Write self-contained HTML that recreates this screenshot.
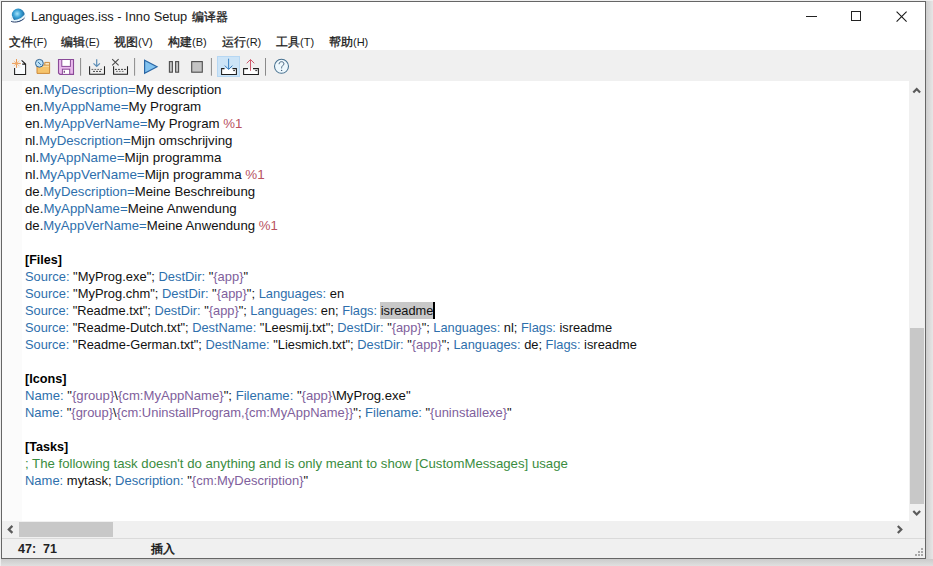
<!DOCTYPE html>
<html><head><meta charset="utf-8">
<style>
html,body{margin:0;padding:0;}
body{width:933px;height:566px;overflow:hidden;position:relative;background:#e6e6e6;font-family:"Liberation Sans",sans-serif;color:#1a1a1a;}
.a{position:absolute;}
#shadow-r{left:926px;top:0;width:7px;height:566px;background:linear-gradient(to right,#cecece,#e6e6e6);}
#shadow-b{left:0;top:559px;width:933px;height:7px;background:linear-gradient(to bottom,#cbcbcb,#e0e0e0);}
#shadow-t{left:0;top:0;width:933px;height:1px;background:#efefef;}
#shadow-l{left:0;top:0;width:1px;height:566px;background:#efefef;}
#win{left:1px;top:1px;width:923px;height:556px;border:1px solid #666;background:#fff;}
.t{font-size:13px;white-space:pre;line-height:17px;}
.code{position:absolute;left:25px;white-space:pre;font-size:13px;line-height:17px;height:17px;transform-origin:0 0;color:#111;}
.k{color:#2e6fac;}
.p{color:#80609c;}
.r{color:#b8525f;}
.c{color:#3a8c40;}
.b{font-weight:bold;color:#000;}
.cj{-webkit-text-stroke:0.3px currentColor;}
.s{}
.m{position:absolute;top:34.5px;font-size:12px;line-height:14px;white-space:pre;transform-origin:0 0;}
.ml{font-size:11px;}
</style></head><body>
<div class="a" id="shadow-r"></div>
<div class="a" id="shadow-b"></div>
<div class="a" id="shadow-t"></div>
<div class="a" id="shadow-l"></div>
<div class="a" id="win"></div>
<!-- title -->
<svg class="a" style="left:6px;top:4px" width="24" height="24" viewBox="6 4 24 24">
  <defs><radialGradient id="g1" cx="0.42" cy="0.4" r="0.65"><stop offset="0" stop-color="#a8e4fa"/><stop offset="0.45" stop-color="#3aa2d6"/><stop offset="1" stop-color="#135c94"/></radialGradient></defs>
  <circle cx="18.2" cy="15" r="6.4" fill="url(#g1)"/>
  <path d="M11 20.2C13.5 21.8 21 21 25.6 15.2" stroke="#e8f6fc" stroke-width="2.2" fill="none"/>
  <path d="M11.2 21.4C15 23 21.5 21.6 24.6 18" stroke="#243a66" stroke-width="1.0" fill="none"/>
  <path d="M11.4 18.8C11.8 17.5 12.5 16.8 13 16.5" stroke="#cfeefa" stroke-width="1" fill="none"/>
</svg>
<div class="a t" id="tt1" style="left:31px;top:9px;font-size:12.5px;transform-origin:0 0;transform:scaleX(1.026)">Languages.iss - Inno Setup</div>
<div class="a t" id="tt2" style="left:192px;top:8.6px;font-size:12px;transform-origin:0 0;"><span class="cj">编译器</span></div>
<div class="a" style="left:806px;top:16px;width:11px;height:1px;background:#222"></div>
<div class="a" style="left:851px;top:11px;width:8px;height:8px;border:1px solid #222"></div>
<svg class="a" style="left:896px;top:10.5px" width="12" height="12" viewBox="0 0 12 12"><path d="M0.6 0.6L10.6 10.6M10.6 0.6L0.6 10.6" stroke="#1a1a1a" stroke-width="1.1"/></svg>
<!-- menu -->
<div class="m" style="left:9px"><span class="cj">文件</span><span class="ml">(F)</span></div>
<div class="m" style="left:61px"><span class="cj">编辑</span><span class="ml">(E)</span></div>
<div class="m" style="left:114px"><span class="cj">视图</span><span class="ml">(V)</span></div>
<div class="m" style="left:168px"><span class="cj">构建</span><span class="ml">(B)</span></div>
<div class="m" style="left:222px"><span class="cj">运行</span><span class="ml">(R)</span></div>
<div class="m" style="left:276px"><span class="cj">工具</span><span class="ml">(T)</span></div>
<div class="m" style="left:329px"><span class="cj">帮助</span><span class="ml">(H)</span></div>
<!-- toolbar -->
<div class="a" style="left:2px;top:50px;width:923px;height:31px;background:#f0f0f0"></div>
<svg class="a" style="left:0;top:50px" width="300" height="30" viewBox="0 50 300 30">
<g fill="none" stroke-linecap="butt">
 <!-- new -->
 <path d="M14.6 68V74.5H25.6V64.1L21.6 60.3H20.5V68Z" fill="#fafcfe" stroke="none"/>
 <path d="M14.6 68V74.5H25.6V64.1L21.6 60.3M22.2 64.1H25.6" stroke="#1e1e1e" stroke-width="1.05"/>
 <g stroke="#eb9a52" stroke-width="1">
  <path d="M12 63.4H20.8M16.5 59V67.8"/>
  <path d="M13.8 60.7L19.2 66.1M19.2 60.7L13.8 66.1" stroke-width="0.9" stroke="#f3bf8c"/>
 </g>
 <circle cx="16.5" cy="63.4" r="1.3" fill="#f0a868"/>
 <!-- open -->
 <path d="M44.8 65.2V62.4H49.6V65.2" fill="#fde9c4" stroke="#c98a3c" stroke-width="1"/>
 <path d="M37 65.2H49.6V73.4H37Z" fill="#f6c46c" stroke="#cd8a3a" stroke-width="1"/>
 <path d="M37.6 66.3H49" stroke="#fbdca0" stroke-width="1.2"/>
 <circle cx="39.4" cy="63.3" r="3.9" fill="#bde2f8" stroke="#2f618f" stroke-width="1"/>
 <path d="M38 61.9L40.9 64.8" stroke="#2d6aa0" stroke-width="1"/>
 <!-- save -->
 <path d="M58.5 59.5H73.5V74.4H60L58.5 72.9Z" fill="#e9b9ec" stroke="#8a4a98" stroke-width="1.1"/>
 <rect x="61.8" y="59.5" width="8.6" height="6.9" fill="#fff" stroke="#8a4a98" stroke-width="1"/>
 <rect x="62.4" y="69.2" width="7.3" height="5.2" fill="#fff" stroke="#8a4a98" stroke-width="1"/>
 <path d="M64.3 70.8V72.8" stroke="#6a3a78" stroke-width="1.2"/>
 <!-- separators -->
 <path d="M80.6 58V75.7M134.6 58V75.7M211.4 58V75.7M265.5 58V75.7" stroke="#8a8a8a" stroke-width="1"/>
 <!-- compile -->
 <path d="M96.7 59.2V66.4M93.5 63.3L96.7 66.5L99.9 63.3" stroke="#5b8db6" stroke-width="1.2"/>
 <path d="M89.6 66.2V74.2H104.5V66.2" stroke="#1e1e1e" stroke-width="1.05"/>
 <path d="M91.5 69.4H103" stroke="#555" stroke-width="0.9" stroke-dasharray="1.8 1.1"/>
 <path d="M93 71.4H101" stroke="#444" stroke-width="1" stroke-dasharray="2 1"/>
 <!-- clean -->
 <path d="M112.2 59.2L118.6 65.4M118.6 59.2L112.2 65.4" stroke="#4a4a4a" stroke-width="1.1"/>
 <path d="M113.6 66.2V74.2H127.5V66.2" stroke="#1e1e1e" stroke-width="1.05"/>
 <path d="M115 69.4H126" stroke="#444" stroke-width="1" stroke-dasharray="2 1"/>
 <path d="M116 71.4H124" stroke="#666" stroke-width="0.9" stroke-dasharray="1.8 1.1"/>
 <!-- run -->
 <path d="M144.6 60.3L157 66.8L144.6 73.2Z" fill="#82c3f0" stroke="#2a66a4" stroke-width="1.2" stroke-linejoin="miter"/>
 <!-- pause -->
 <rect x="169.4" y="61.6" width="3" height="10.6" fill="#c4c4c4" stroke="#4e4e4e" stroke-width="1.1"/>
 <rect x="175.6" y="61.6" width="3" height="10.6" fill="#c4c4c4" stroke="#4e4e4e" stroke-width="1.1"/>
 <!-- stop -->
 <rect x="191.7" y="61.6" width="10.6" height="10.6" fill="#c4c4c4" stroke="#4e4e4e" stroke-width="1.1"/>
 <!-- highlighted -->
 <rect x="217.5" y="56.5" width="22" height="20" fill="#cce4f7" stroke="#b6d7f3" stroke-width="1"/>
 <rect x="221.6" y="68.6" width="14.8" height="5.8" fill="#fff"/>
 <path d="M224.5 68.6H221.6V74.4H236.4V68.6H232.5" stroke="#1e1e1e" stroke-width="1.05"/>
 <path d="M233.2 70.6H235" stroke="#333" stroke-width="1"/>
 <path d="M228.6 58.7V69.4M224.8 65.6L228.6 69.4L232.4 65.6" stroke="#3a80c0" stroke-width="1"/>
 <!-- upload -->
 <rect x="243.6" y="68.6" width="14.8" height="5.8" fill="#fff"/>
 <path d="M248 68.6H243.6V74.4H258.4V68.6H253" stroke="#1e1e1e" stroke-width="1.05"/>
 <path d="M255.3 70.6H257.2" stroke="#333" stroke-width="1"/>
 <path d="M250.5 59.6V70.8M246.7 63.3L250.5 59.5L254.3 63.3" stroke="#cf5a6c" stroke-width="1"/>
 <!-- help -->
 <circle cx="281.5" cy="66.3" r="7" fill="#eef8fd" stroke="#46708f" stroke-width="1.05"/>
 <path d="M279.1 64.2C279.1 62.5 280.2 61.7 281.5 61.7C282.9 61.7 283.9 62.5 283.9 63.8C283.9 65.4 281.6 65.8 281.6 67.7V68.4" stroke="#46637e" stroke-width="1"/>
 <circle cx="281.6" cy="70.4" r="0.7" fill="#46637e"/>
</g>
</svg>
<!-- editor -->
<div class="a" style="left:909px;top:81px;width:16px;height:440px;background:#f0f0f0"></div>
<div class="a" style="left:910px;top:328px;width:14px;height:176px;background:#c8c8c8"></div>
<div class="a" style="left:2px;top:521px;width:923px;height:17px;background:#f0f0f0"></div>
<div class="a" style="left:19px;top:522px;width:94px;height:15px;background:#c8c8c8"></div>
<div class="a" style="left:2px;top:538px;width:923px;height:1px;background:#dadada"></div>
<div class="a" style="left:2px;top:539px;width:923px;height:19px;background:#f0f0f0"></div>
<div class="a" style="left:2px;top:81px;width:20px;height:440px;background:#fbfbfb"></div>
<!-- selection + caret -->
<div class="a" style="left:380px;top:302px;width:53px;height:17px;background:#c8c8c8"></div>
<div class="code" style="top:81px;transform:scaleX(1.0241)"><span class="n">en.</span><span class="k">MyDescription=</span><span class="n">My description</span></div>
<div class="code" style="top:98px;transform:scaleX(1.0269)"><span class="n">en.</span><span class="k">MyAppName=</span><span class="n">My Program</span></div>
<div class="code" style="top:115px;transform:scaleX(1.0178)"><span class="n">en.</span><span class="k">MyAppVerName=</span><span class="n">My Program </span><span class="r">%1</span></div>
<div class="code" style="top:132px;transform:scaleX(1.0197)"><span class="n">nl.</span><span class="k">MyDescription=</span><span class="n">Mijn omschrijving</span></div>
<div class="code" style="top:149px;transform:scaleX(1.0314)"><span class="n">nl.</span><span class="k">MyAppName=</span><span class="n">Mijn programma</span></div>
<div class="code" style="top:166px;transform:scaleX(1.0319)"><span class="n">nl.</span><span class="k">MyAppVerName=</span><span class="n">Mijn programma </span><span class="r">%1</span></div>
<div class="code" style="top:183px;transform:scaleX(1.0159)"><span class="n">de.</span><span class="k">MyDescription=</span><span class="n">Meine Beschreibung</span></div>
<div class="code" style="top:200px;transform:scaleX(1.0184)"><span class="n">de.</span><span class="k">MyAppName=</span><span class="n">Meine Anwendung</span></div>
<div class="code" style="top:217px;transform:scaleX(1.0120)"><span class="n">de.</span><span class="k">MyAppVerName=</span><span class="n">Meine Anwendung </span><span class="r">%1</span></div>
<div class="code" style="top:251px;transform:scaleX(0.9632)"><span class="b">[Files]</span></div>
<div class="code" style="top:268px;transform:scaleX(0.9938)"><span class="k">Source:</span><span class="n"> &quot;MyProg.exe&quot;; </span><span class="k">DestDir:</span><span class="n"> &quot;</span><span class="p">{app}</span><span class="n">&quot;</span></div>
<div class="code" style="top:285px;transform:scaleX(0.9931)"><span class="k">Source:</span><span class="n"> &quot;MyProg.chm&quot;; </span><span class="k">DestDir:</span><span class="n"> &quot;</span><span class="p">{app}</span><span class="n">&quot;; </span><span class="k">Languages:</span><span class="n"> en</span></div>
<div class="code" style="top:302px;transform:scaleX(0.9850)"><span class="k">Source:</span><span class="n"> &quot;Readme.txt&quot;; </span><span class="k">DestDir:</span><span class="n"> &quot;</span><span class="p">{app}</span><span class="n">&quot;; </span><span class="k">Languages:</span><span class="n"> en; </span><span class="k">Flags:</span><span class="n"> </span><span class="s">isreadme</span></div>
<div class="code" style="top:319px;transform:scaleX(0.9856)"><span class="k">Source:</span><span class="n"> &quot;Readme-Dutch.txt&quot;; </span><span class="k">DestName:</span><span class="n"> &quot;Leesmij.txt&quot;; </span><span class="k">DestDir:</span><span class="n"> &quot;</span><span class="p">{app}</span><span class="n">&quot;; </span><span class="k">Languages:</span><span class="n"> nl; </span><span class="k">Flags:</span><span class="n"> isreadme</span></div>
<div class="code" style="top:336px;transform:scaleX(0.9877)"><span class="k">Source:</span><span class="n"> &quot;Readme-German.txt&quot;; </span><span class="k">DestName:</span><span class="n"> &quot;Liesmich.txt&quot;; </span><span class="k">DestDir:</span><span class="n"> &quot;</span><span class="p">{app}</span><span class="n">&quot;; </span><span class="k">Languages:</span><span class="n"> de; </span><span class="k">Flags:</span><span class="n"> isreadme</span></div>
<div class="code" style="top:370px;transform:scaleX(0.9762)"><span class="b">[Icons]</span></div>
<div class="code" style="top:387px;transform:scaleX(1.0094)"><span class="k">Name:</span><span class="n"> &quot;</span><span class="p">{group}</span><span class="n">\</span><span class="p">{cm:MyAppName}</span><span class="n">&quot;; </span><span class="k">Filename:</span><span class="n"> &quot;</span><span class="p">{app}</span><span class="n">\MyProg.exe&quot;</span></div>
<div class="code" style="top:404px;transform:scaleX(0.9955)"><span class="k">Name:</span><span class="n"> &quot;</span><span class="p">{group}</span><span class="n">\</span><span class="p">{cm:UninstallProgram,{cm:MyAppName}}</span><span class="n">&quot;; </span><span class="k">Filename:</span><span class="n"> &quot;</span><span class="p">{uninstallexe}</span><span class="n">&quot;</span></div>
<div class="code" style="top:438px;transform:scaleX(0.9682)"><span class="b">[Tasks]</span></div>
<div class="code" style="top:455px;transform:scaleX(1.0150)"><span class="c">; The following task doesn&#x27;t do anything and is only meant to show [CustomMessages] usage</span></div>
<div class="code" style="top:472px;transform:scaleX(0.9979)"><span class="k">Name:</span><span class="n"> mytask; </span><span class="k">Description:</span><span class="n"> &quot;</span><span class="p">{cm:MyDescription}</span><span class="n">&quot;</span></div>
<div class="a" style="left:433px;top:302px;width:2px;height:17px;background:#000"></div>
<!-- status -->
<div class="a t" style="left:18px;top:541px;font-size:12.5px;font-weight:bold;color:#222">47:  71</div>
<div class="a t" style="left:151px;top:540.5px;font-size:12px;color:#111"><span class="cj" style="-webkit-text-stroke:0.45px #111">插入</span></div>
<!-- scroll arrows -->
<svg class="a" style="left:0;top:0" width="933" height="566" viewBox="0 0 933 566">
 <g fill="none" stroke="#5a5a5a" stroke-width="2.2" stroke-linejoin="miter">
  <path d="M913.3 92.6L916.7 89.1L920.1 92.6"/>
  <path d="M913.3 511L916.7 514.5L920.1 511"/>
  <path d="M12.4 525.9L8.8 529.4L12.4 532.9"/>
  <path d="M897.8 526L901.3 529.5L897.8 533"/>
 </g>
 <g fill="#a8a8a8">
  <rect x="921" y="548" width="2" height="2"/>
  <rect x="918" y="551" width="2" height="2"/><rect x="921" y="551" width="2" height="2"/>
  <rect x="915" y="554" width="2" height="2"/><rect x="918" y="554" width="2" height="2"/><rect x="921" y="554" width="2" height="2"/>
 </g>
</svg>
</body></html>
